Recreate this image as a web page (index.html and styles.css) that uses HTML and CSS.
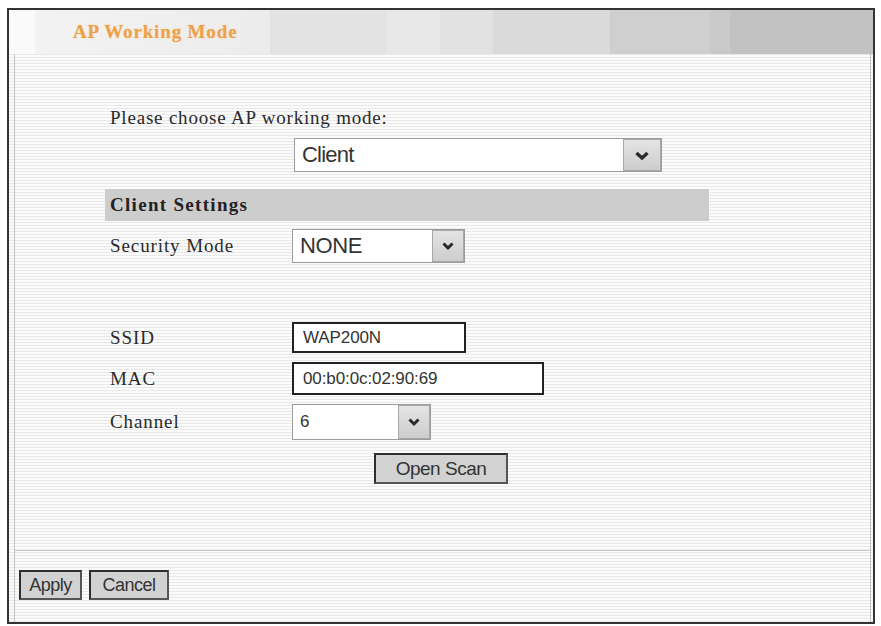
FILE: index.html
```html
<!DOCTYPE html>
<html lang="en">
<head>
<meta charset="utf-8">
<title>AP Working Mode</title>
<link rel="stylesheet" href="styles.css">
</head>
<body>
<div class="frame">
  <div class="tabs">
    <div class="tab tab-lead"></div>
    <div class="tab tab-active">AP Working Mode</div>
    <div class="tab tab-2"></div>
    <div class="tab tab-3"></div>
    <div class="tab tab-4"></div>
    <div class="tab tab-5"></div>
    <div class="tab tab-6"></div>
    <div class="tab tab-7"></div>
    <div class="tab tab-8"></div>
  </div>
  <div class="panel">
    <div class="content">
      <p class="prompt">Please choose AP working mode:</p>
      <div class="mode-row">
        <div class="select select-mode">
          <span class="select-value">Client</span>
          <span class="select-arrow"><svg width="16" height="11" viewBox="0 0 16 11"><path d="M2.5 3 L8 8 L13.5 3" fill="none" stroke="#2a2a2a" stroke-width="3.4"/></svg></span>
        </div>
      </div>
      <div class="section-bar">Client Settings</div>
      <div class="field field-security">
        <span class="field-label">Security Mode</span>
        <div class="select select-security">
          <span class="select-value">NONE</span>
          <span class="select-arrow"><svg width="14" height="10" viewBox="0 0 14 10"><path d="M2.5 2.5 L7 7 L11.5 2.5" fill="none" stroke="#2a2a2a" stroke-width="3"/></svg></span>
        </div>
      </div>
      <div class="field field-ssid">
        <span class="field-label">SSID</span>
        <div class="text-box box-ssid">WAP200N</div>
      </div>
      <div class="field field-mac">
        <span class="field-label">MAC</span>
        <div class="text-box box-mac">00:b0:0c:02:90:69</div>
      </div>
      <div class="field field-channel">
        <span class="field-label">Channel</span>
        <div class="select select-channel">
          <span class="select-value">6</span>
          <span class="select-arrow"><svg width="14" height="10" viewBox="0 0 14 10"><path d="M2.5 2.5 L7 7 L11.5 2.5" fill="none" stroke="#2a2a2a" stroke-width="3"/></svg></span>
        </div>
      </div>
      <div class="scan-row">
        <button class="btn btn-scan" type="button">Open Scan</button>
      </div>
    </div>
    <div class="footer">
      <button class="btn btn-apply" type="button">Apply</button>
      <button class="btn btn-cancel" type="button">Cancel</button>
    </div>
  </div>
</div>
</body>
</html>
```
FILE: styles.css
```css
html, body {
  margin: 0;
  padding: 0;
  background: #ffffff;
}

body {
  padding: 8px 6px 2px 7px;
  font-family: "Liberation Serif", "Times New Roman", serif;
  color: #2a2a2a;
}

.frame {
  width: 864px;
  height: 612px;
  border: 2px solid #333333;
  display: flex;
  flex-direction: column;
  background: repeating-linear-gradient(to bottom, #fbfbfb 0, #fbfbfb 2px, #e9e9e9 2px, #e9e9e9 3px);
}

/* tab strip */
.tabs {
  height: 44px;
  display: flex;
  flex: none;
}

.tab {
  height: 100%;
}

.tab-lead { width: 26px; background: #fafafa; }
.tab-active {
  width: 197px;
  padding-left: 38px;
  background: linear-gradient(to right, #f3f3f3, #ececec);
  color: #eda04a;
  font-weight: bold;
  font-size: 19px;
  letter-spacing: 0.85px;
  line-height: 44px;
  text-shadow: 0 0 2px #f7d9b0;
}
.tab-2 { width: 117px; background: #e3e3e3; }
.tab-3 { width: 53px; background: #e8e8e8; }
.tab-4 { width: 53px; background: #e2e2e2; }
.tab-5 { width: 117px; background: #dadada; }
.tab-6 { width: 100px; background: #cfcfcf; }
.tab-7 { width: 20px; background: #c9c9c9; }
.tab-8 { flex: 1; background: #c2c2c2; }

/* main panel */
.panel {
  flex: 1;
  margin: 0 2px 0 5px;
  border-left: 1px solid #c4c4c4;
  border-right: 1px solid #c4c4c4;
  display: flex;
  flex-direction: column;
}

.content {
  height: 497px;
  border-bottom: 1px solid #c8c8c8;
  padding-left: 95px;
  box-sizing: border-box;
  padding-top: 53px;
}

.prompt {
  margin: 0;
  font-size: 19px;
  line-height: 22px;
  letter-spacing: 0.8px;
}

.mode-row {
  margin-top: 9px;
  padding-left: 184px;
}

/* drop-down boxes */
.select {
  display: flex;
  align-items: stretch;
  box-sizing: border-box;
  border: 1px solid #9c9c9c;
  background: #ffffff;
  font-family: "Liberation Sans", Arial, sans-serif;
  color: #333333;
}

.select-value {
  flex: 1;
  display: flex;
  align-items: center;
  padding-left: 7px;
}

.select-arrow {
  display: flex;
  align-items: center;
  justify-content: center;
  border: 1px solid #a8a8a8;
  background: linear-gradient(to bottom, #e4e4e4, #cdcdcd);
}

.select-mode {
  width: 368px;
  height: 34px;
  font-size: 22px;
  letter-spacing: -0.8px;
}
.select-mode .select-arrow { width: 36px; }

.section-bar {
  margin: 17px 0 0 -5px;
  width: 604px;
  height: 32px;
  box-sizing: border-box;
  padding-left: 5px;
  background: #cdcdcd;
  font-weight: bold;
  font-size: 19px;
  line-height: 32px;
  letter-spacing: 1.3px;
  color: #222222;
}

/* label + control rows */
.field {
  display: flex;
  align-items: center;
}

.field-label {
  width: 182px;
  flex: none;
  font-size: 19px;
  letter-spacing: 0.9px;
}

.field-security { margin-top: 8px; }
.field-ssid { margin-top: 59px; }
.field-mac { margin-top: 9px; }
.field-channel { margin-top: 9px; }

.select-security {
  width: 173px;
  height: 34px;
  font-size: 22px;
  letter-spacing: -0.4px;
}
.select-security .select-arrow { width: 30px; }

.select-channel {
  width: 139px;
  height: 36px;
  font-size: 17px;
}
.select-channel .select-arrow { width: 30px; }

.text-box {
  box-sizing: border-box;
  border: 2px solid #222222;
  background: #ffffff;
  font-family: "Liberation Sans", Arial, sans-serif;
  font-size: 17px;
  letter-spacing: -0.1px;
  color: #333333;
  padding-left: 9px;
  display: flex;
  align-items: center;
}

.box-ssid { width: 174px; height: 31px; }
.box-mac { width: 252px; height: 33px; }

.scan-row {
  margin-top: 13px;
  padding-left: 264px;
}

/* push buttons */
.btn {
  box-sizing: border-box;
  margin: 0;
  padding: 0;
  border: 2px solid #2e2e2e;
  border-right-color: #555555;
  border-bottom-color: #555555;
  background: #d2d2d2;
  font-family: "Liberation Sans", Arial, sans-serif;
  color: #333333;
  letter-spacing: -0.5px;
}

.btn-scan {
  width: 134px;
  height: 31px;
  font-size: 19px;
}

.footer {
  flex: 1;
  display: flex;
  align-items: flex-start;
  gap: 7px;
  padding: 19px 0 0 4px;
}

.btn-apply {
  width: 63px;
  height: 30px;
  font-size: 18px;
}

.btn-cancel {
  width: 80px;
  height: 30px;
  font-size: 18px;
}
```
